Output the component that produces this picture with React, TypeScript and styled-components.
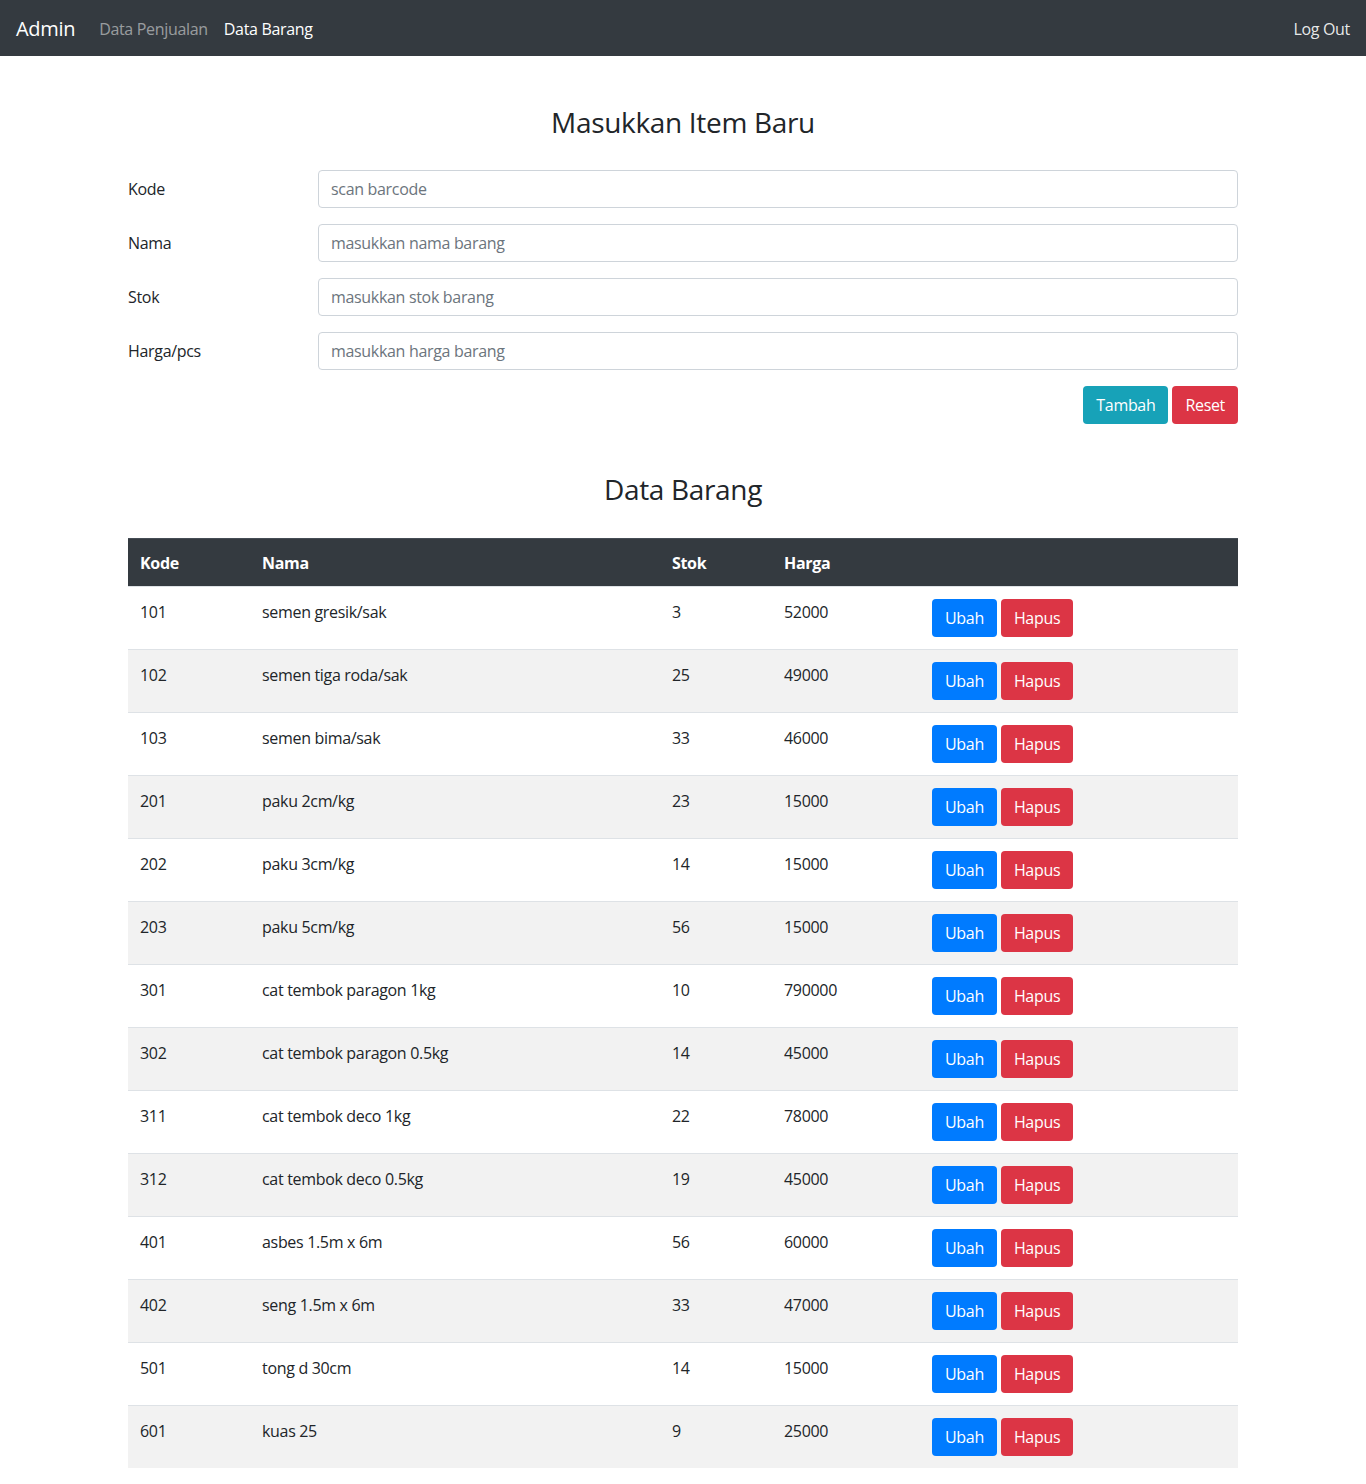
import React from "react";
import styled, { createGlobalStyle } from "styled-components";

const GlobalStyle = createGlobalStyle`
  * { box-sizing: border-box; }
  body {
    margin: 0;
    font-family: "Segoe UI", "Open Sans", "Noto Sans", Arial, sans-serif;
    font-size: 16px;
    line-height: 1.5;
    letter-spacing: -0.02em;
    color: #212529;
    background: #fff;
  }
`;

const Navbar = styled.nav`
  height: 56px;
  background: #343a40;
  display: flex;
  align-items: center;
  padding: 2px 16px 0;
`;

const Brand = styled.a`
  font-size: 20px;
  line-height: 30px;
  color: #fff;
  margin-right: 16px;
  text-decoration: none;
`;

const NavLinks = styled.div`
  display: flex;
  flex: 1;
`;

const NavLink = styled.a<{ $active?: boolean }>`
  padding: 8px 8px;
  color: ${(p) => (p.$active ? "#fff" : "rgba(255,255,255,0.5)")};
  text-decoration: none;
`;

const LogOut = styled.a`
  color: rgba(255, 255, 255, 0.9);
  text-decoration: none;
`;

const Container = styled.main`
  width: 1140px;
  margin: 0 auto;
  padding: 0 15px;
`;

const Title = styled.h3<{ $top: number; $bottom: number }>`
  font-size: 28px;
  font-weight: 400;
  line-height: 1.2;
  text-align: center;
  margin: ${(p) => p.$top}px 0 ${(p) => p.$bottom}px;
`;

const FormRow = styled.div`
  display: grid;
  grid-template-columns: 190px 1fr;
  align-items: center;
  margin-bottom: 16px;
`;

const Label = styled.label`
  padding: 7px 0;
`;

const Input = styled.input`
  height: 38px;
  width: 100%;
  padding: 6px 12px;
  font: inherit;
  letter-spacing: inherit;
  color: #495057;
  border: 1px solid #ced4da;
  border-radius: 4px;
  &::placeholder { color: #6c757d; }
`;

const Actions = styled.div`
  display: flex;
  justify-content: flex-end;
  gap: 4px;
`;

const Button = styled.button<{ $variant: "info" | "danger" | "primary" }>`
  height: 38px;
  padding: 6px 12px;
  font: inherit;
  letter-spacing: inherit;
  color: #fff;
  border: 1px solid transparent;
  border-radius: 4px;
  background: ${(p) =>
    p.$variant === "info" ? "#17a2b8" : p.$variant === "danger" ? "#dc3545" : "#007bff"};
`;

const Table = styled.table`
  width: 100%;
  border-collapse: collapse;
  margin-bottom: 16px;
`;

const HeadCell = styled.th`
  background: #343a40;
  color: #fff;
  text-align: left;
  font-weight: 700;
  padding: 12px 12px 10px;
  border-top: 1px solid #454d55;
  line-height: 25px;
`;

const Row = styled.tr<{ $striped: boolean }>`
  background: ${(p) => (p.$striped ? "#f2f2f2" : "#fff")};
`;

const Cell = styled.td`
  padding: 12px;
  line-height: 27px;
  vertical-align: top;
  border-top: 1px solid #dee2e6;
`;

const ButtonGroup = styled.div`
  display: flex;
  gap: 4px;
  line-height: 1.5;
`;

const items: [string, string, string, string][] = [
  ["101", "semen gresik/sak", "3", "52000"],
  ["102", "semen tiga roda/sak", "25", "49000"],
  ["103", "semen bima/sak", "33", "46000"],
  ["201", "paku 2cm/kg", "23", "15000"],
  ["202", "paku 3cm/kg", "14", "15000"],
  ["203", "paku 5cm/kg", "56", "15000"],
  ["301", "cat tembok paragon 1kg", "10", "790000"],
  ["302", "cat tembok paragon 0.5kg", "14", "45000"],
  ["311", "cat tembok deco 1kg", "22", "78000"],
  ["312", "cat tembok deco 0.5kg", "19", "45000"],
  ["401", "asbes 1.5m x 6m", "56", "60000"],
  ["402", "seng 1.5m x 6m", "33", "47000"],
  ["501", "tong d 30cm", "14", "15000"],
  ["601", "kuas 25", "9", "25000"],
];

export default function App() {
  return (
    <>
      <GlobalStyle />
      <Navbar>
        <Brand href="#">Admin</Brand>
        <NavLinks>
          <NavLink href="#">Data Penjualan</NavLink>
          <NavLink href="#" $active>Data Barang</NavLink>
        </NavLinks>
        <LogOut href="#">Log Out</LogOut>
      </Navbar>
      <Container>
        <Title $top={50} $bottom={30}>Masukkan Item Baru</Title>
        <FormRow>
          <Label>Kode</Label>
          <Input placeholder="scan barcode" />
        </FormRow>
        <FormRow>
          <Label>Nama</Label>
          <Input placeholder="masukkan nama barang" />
        </FormRow>
        <FormRow>
          <Label>Stok</Label>
          <Input placeholder="masukkan stok barang" />
        </FormRow>
        <FormRow>
          <Label>Harga/pcs</Label>
          <Input placeholder="masukkan harga barang" />
        </FormRow>
        <Actions>
          <Button $variant="info">Tambah</Button>
          <Button $variant="danger">Reset</Button>
        </Actions>
        <Title $top={49} $bottom={32}>Data Barang</Title>
        <Table>
          <colgroup>
            <col style={{ width: 122 }} />
            <col style={{ width: 410 }} />
            <col style={{ width: 112 }} />
            <col style={{ width: 148 }} />
            <col />
          </colgroup>
          <thead>
            <tr>
              <HeadCell>Kode</HeadCell>
              <HeadCell>Nama</HeadCell>
              <HeadCell>Stok</HeadCell>
              <HeadCell>Harga</HeadCell>
              <HeadCell />
            </tr>
          </thead>
          <tbody>
            {items.map(([kode, nama, stok, harga], i) => (
              <Row key={kode} $striped={i % 2 === 1}>
                <Cell>{kode}</Cell>
                <Cell>{nama}</Cell>
                <Cell>{stok}</Cell>
                <Cell>{harga}</Cell>
                <Cell>
                  <ButtonGroup>
                    <Button $variant="primary">Ubah</Button>
                    <Button $variant="danger">Hapus</Button>
                  </ButtonGroup>
                </Cell>
              </Row>
            ))}
          </tbody>
        </Table>
      </Container>
    </>
  );
}
